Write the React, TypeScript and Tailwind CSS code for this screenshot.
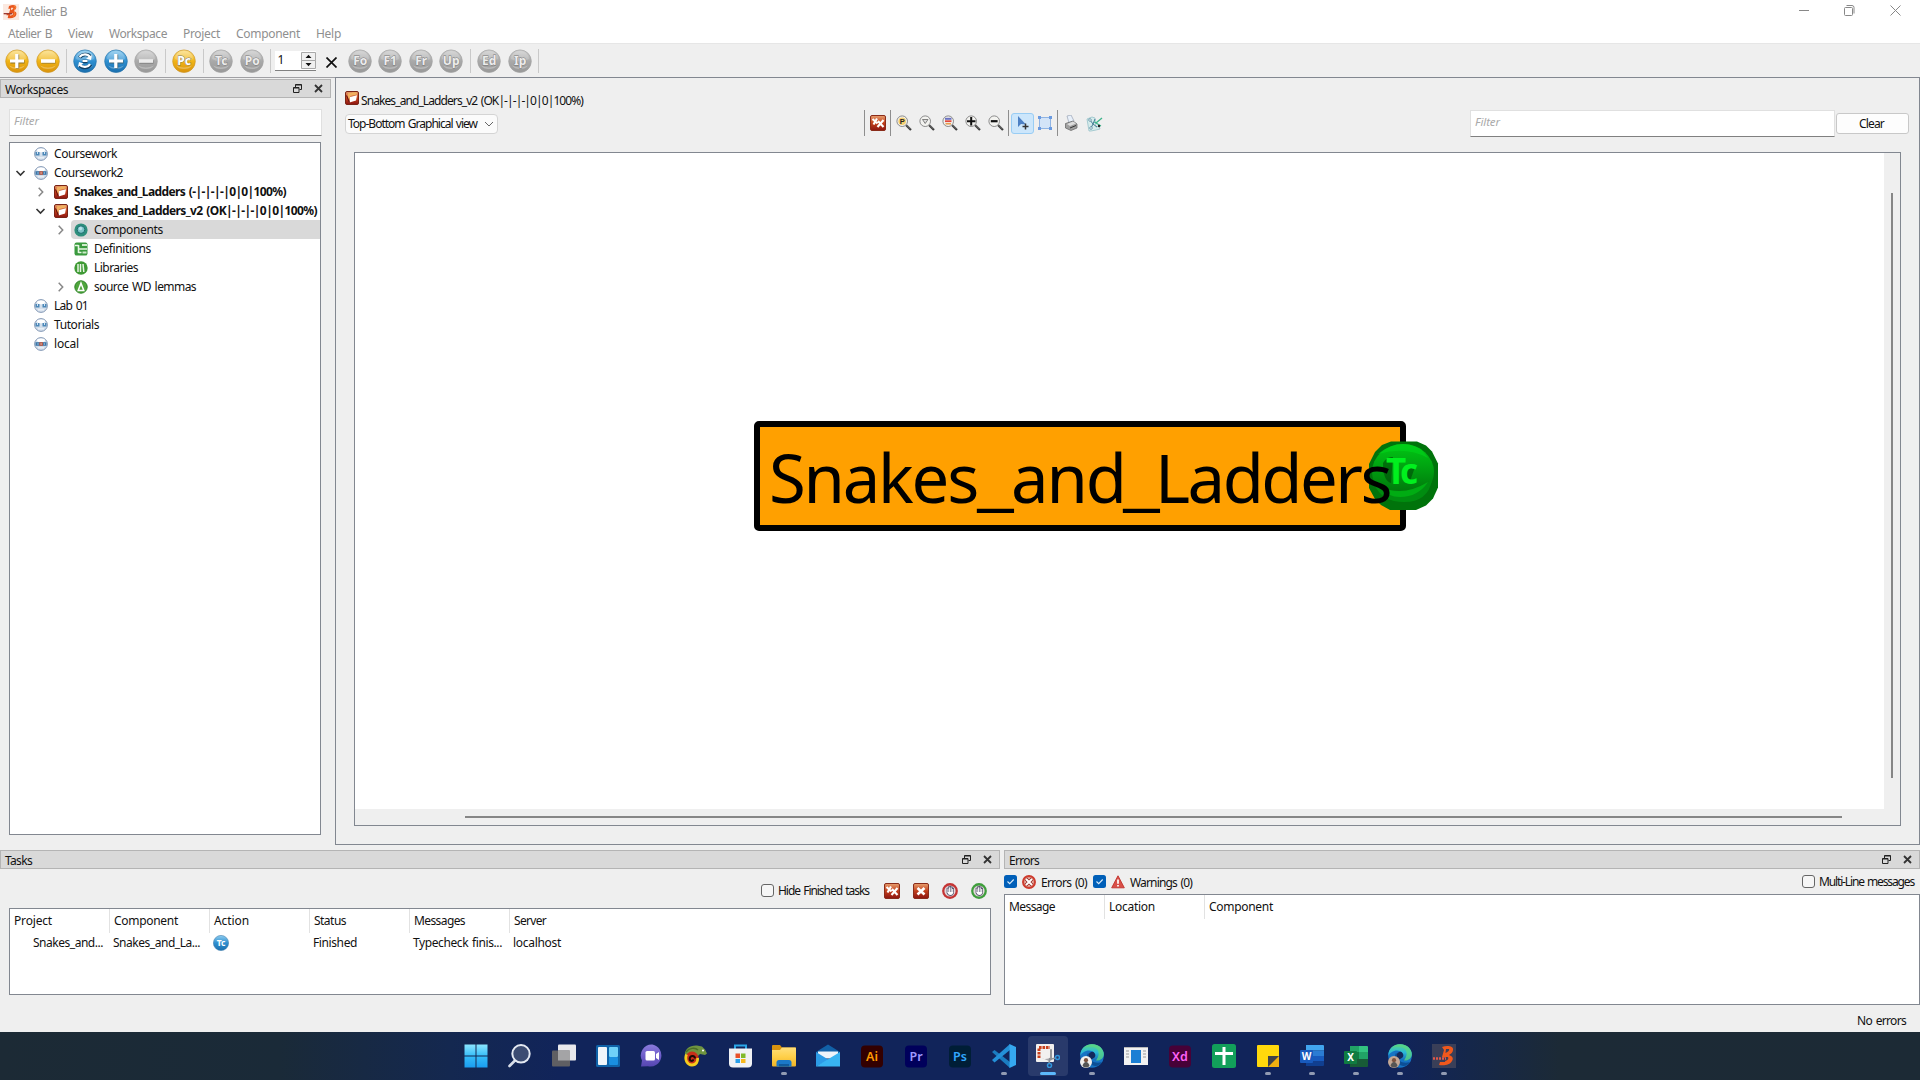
import { useLayoutEffect, useRef, type ReactNode } from "react";

/* Text run whose tracking is computed so that it spans the given width. */
function Fit({ w, children, className = "" }: { w: number; children: string; className?: string }) {
  const ref = useRef<HTMLSpanElement>(null);
  useLayoutEffect(() => {
    const el = ref.current;
    if (!el) return;
    el.style.letterSpacing = "0px";
    const natural = el.getBoundingClientRect().width;
    el.style.letterSpacing = `${(w - natural) / children.length}px`;
  }, [w, children]);
  return (
    <span ref={ref} className={`inline-block shrink-0 whitespace-pre [word-spacing:1.2px] ${className}`}>
      {children}
    </span>
  );
}

function Gradients() {
  const stops: [string, string, string, string][] = [
    ["gold", "#fbe08a", "#f0b416", "#d9920c"],
    ["blue", "#8fcdf0", "#2e8fd0", "#1b6fae"],
    ["grey", "#cfcfcf", "#a9a9a9", "#989898"],
    ["red", "#e8a070", "#c2401c", "#8c1512"],
    ["green", "#00c814", "#009a10", "#006a0a"],
    ["win", "#8be6ff", "#35bdf8", "#1a9df0"],
    ["folder", "#ffdf7a", "#ffcf48", "#f0b428"],
    ["chat", "#8b7bdc", "#6f5fcb", "#5546b0"],
    ["edge", "#58d68a", "#2bb8d8", "#1566b8"],
  ];
  return (
    <svg className="absolute size-0" aria-hidden="true">
      <defs>
        {stops.map(([id, a, b, c]) => (
          <linearGradient key={id} id={id} x1="0" y1="0" x2="0" y2="1">
            <stop offset="0" stopColor={a} />
            <stop offset="0.5" stopColor={b} />
            <stop offset="1" stopColor={c} />
          </linearGradient>
        ))}
      </defs>
    </svg>
  );
}

type Tone = "gold" | "blue" | "grey";
const rim: Record<Tone, string> = { gold: "#cf9a2c", blue: "#2a76ac", grey: "#a4a4a4" };

function Orb({ tone, label, glyph }: { tone: Tone; label?: string; glyph?: "plus" | "minus" | "sync" }) {
  const ink = tone === "grey" ? "#ececec" : "#ffffff";
  return (
    <svg className="size-6 shrink-0" viewBox="0 0 24 24">
      <circle cx="12" cy="12.2" r="11.3" fill={`url(#${tone})`} stroke={rim[tone]} strokeWidth="0.7" />
      <path d="M3 10a9 8 0 0 1 18 0q-9 5-18 0z" fill="#fff" opacity="0.2" />
      <path d="M4 16.5a9 6.5 0 0 0 16 0q-8 4-16 0z" fill="#fff" opacity="0.28" />
      {glyph === "plus" && (
        <>
          <path d="M12.6 5.5v14M5.5 12.8h14" stroke="#4c4c3c" strokeWidth="3.2" opacity="0.6" />
          <path d="M11.8 5v14M5 12h14" stroke={ink} strokeWidth="3.2" />
        </>
      )}
      {glyph === "minus" && (
        <>
          <path d="M5.5 13h14" stroke="#555" strokeWidth="3.6" opacity="0.4" />
          <path d="M5 12h14" stroke={ink} strokeWidth="3.6" />
        </>
      )}
      {glyph === "sync" && (
        <>
          <path d="M6.5 8.5c3-4 9-4 11-.5M17.5 15.5c-2 4-8 4-11 .5M9.5 12.5h5" fill="none" stroke="#124064" strokeWidth="3.6" />
          <path d="M6.5 8c3-3.5 8-3.5 10.5 0M17 15c-2 3.5-7.5 4-10.5.5M9.5 12h5" fill="none" stroke="#fff" strokeWidth="2.2" />
          <path d="M19 6l-1 5-5-1.5zM5 18l1-5 4.5 1.5z" fill="#fff" />
        </>
      )}
      {label && (
        <text x="12.2" y="15.5" textAnchor="middle" fontSize="12" fontWeight="700" fontFamily="Noto Sans, sans-serif" fill={ink} stroke="#777" strokeWidth="0.8" paintOrder="stroke">{label}</text>
      )}
    </svg>
  );
}

const Sep = ({ className = "" }: { className?: string }) => <div className={`h-6 w-px shrink-0 bg-[#c9c9c9] ${className}`} />;

function BLogo({ className }: { className: string }) {
  return (
    <svg className={className} viewBox="0 0 24 24">
      <rect width="24" height="24" fill="#fbe9e0" />
      <path d="M9 3c5-2 11-2 11 2 0 3-3 5-4 6 3 0 5 2 4 5-1 4-6 6-13 5l1-4h-3l1-3h3l2-7H8z" fill="#e8541c" />
      <path d="M12 5.5h3.5q1 2-3.5 4zM11.5 13.5h3.5q1.5 3-4.5 4z" fill="#fbd9c4" />
      <path d="M1 14.5h13" stroke="#9c3a30" strokeWidth="2" />
      <path d="M16 3l3 1-2 5M17 12l1 3-3 4" stroke="#ff9a3c" fill="none" />
    </svg>
  );
}

const ProjectIcon = () => (
  <svg className="size-3.5 shrink-0" viewBox="0 0 14 14">
    <rect x=".5" y=".5" width="13" height="13" rx="1.5" fill="url(#red)" stroke="#7a2416" />
    <path d="M2.5 3.5l1-1.500h3l1-.8h4l.5 2.300-6.500 1.500-1.500 5z" fill="#f0b060" />
    <path d="M5 6l7-1.800-1 5.300-6.500 2z" fill="#fff" />
    <path d="M1.5 4.5l3 7" stroke="#5c100c" />
  </svg>
);

const WorkspaceIcon = ({ open }: { open?: boolean }) => (
  <svg className="size-3.5 shrink-0" viewBox="0 0 14 14">
    <circle cx="7" cy="7" r="6.4" fill="#d3deeb" stroke="#8599b5" strokeWidth="1" />
    <ellipse cx="7" cy="3.4" rx="4" ry="1.8" fill="#fff" />
    {open ? (
      <>
        <path d="M1.5 5.2h11v3.6h-11z" fill="#3a75a8" />
        <path d="M5.3 5.2h3.6v3.6H5.3z" fill="#c25a42" />
        <path d="M4 6.2v1.6M7.1 6.2v1.6M10.3 6.2v1.6" stroke="#e6eef6" strokeWidth=".7" />
      </>
    ) : (
      <>
        <path d="M1.5 5h4v3.5h-4zM8.5 5h4v3.5h-4z" fill="#4b87b8" />
        <path d="M3.5 4.5v2.5M10.5 4.5v2.5" stroke="#d3e3f1" />
      </>
    )}
    <path d="M4 10.8h6" stroke="#eef3f8" strokeWidth="1.2" />
  </svg>
);

const GreenIcon = ({ kind }: { kind: "comp" | "def" | "lib" | "wd" }) => (
  <svg className="size-3.5 shrink-0" viewBox="0 0 14 14">
    {kind === "comp" && (
      <>
        <circle cx="7" cy="7" r="6.6" fill="#2d8f7c" />
        <circle cx="7" cy="6.6" r="3.8" fill="#7fc4c8" stroke="#1d6f70" />
        <circle cx="6.5" cy="5.5" r="1.7" fill="#b9e2ea" />
      </>
    )}
    {kind === "def" && (
      <>
        <rect x=".5" y=".5" width="13" height="13" rx="2" fill="#3a9a3e" />
        <path d="M4.5 3v8M4.5 3.5H1M4.5 7h8.5M4.5 10.5h3" stroke="#e7f6e4" strokeWidth="1.6" />
        <path d="M8 3h5M8.5 10.5h4" stroke="#cfeccb" strokeWidth="1.8" />
      </>
    )}
    {kind === "lib" && (
      <>
        <circle cx="7" cy="7" r="6.7" fill="#3f9a35" />
        <path d="M4 3v8M6.5 3v8M9 3l.8 8" stroke="#eaf6e6" strokeWidth="1.5" />
      </>
    )}
    {kind === "wd" && (
      <>
        <circle cx="7" cy="7" r="6.2" fill="#4fa53d" stroke="#2c8426" />
        <path d="M7 3.2l2.8 7.3H4.2z" fill="none" stroke="#fff" strokeWidth="1.5" />
      </>
    )}
  </svg>
);

const Chevron = ({ state }: { state?: "open" | "closed" }) => (
  <svg className="size-3 shrink-0" viewBox="0 0 12 12" fill="none">
    {state === "open" && <path d="M2.5 4l4 4 4-4" stroke="#333" strokeWidth="1.6" />}
    {state === "closed" && <path d="M4.7 1.8l4 4.2-4 4.2" stroke="#888" strokeWidth="1.5" />}
  </svg>
);

function DockTitle({ title, w, className = "" }: { title: string; w: number; className?: string }) {
  return (
    <div className={`flex h-[19px] shrink-0 items-center border border-[#b4b4b4] bg-[#d9d9d9] pl-1 pr-[7px] ${className}`}>
      <Fit w={w} className="relative top-px">{title}</Fit>
      <svg className="ml-auto size-[9px]" viewBox="0 0 9 9" fill="none" stroke="#222">
        <path d="M2.5 3V.5h6V5.5H6.5M.5 3.5h5.5v5H.5zM2.5 1h6M.5 4h5.5" />
      </svg>
      <svg className="ml-3 size-[9px]" viewBox="0 0 9 9" fill="none" stroke="#333" strokeWidth="1.8">
        <path d="M1 1l7 7M8 1l-7 7" />
      </svg>
    </div>
  );
}

interface Row {
  label: string;
  w: number;
  indent: string;
  state?: "open" | "closed";
  icon: ReactNode;
  bold?: boolean;
  selected?: boolean;
}

const rows: Row[] = [
  { label: "Coursework", w: 63, indent: "pl-1", icon: <WorkspaceIcon /> },
  { label: "Coursework2", w: 69, indent: "pl-1", state: "open", icon: <WorkspaceIcon open /> },
  { label: "Snakes_and_Ladders (-|-|-|-|0|0|100%)", w: 212, indent: "pl-6", state: "closed", icon: <ProjectIcon />, bold: true },
  { label: "Snakes_and_Ladders_v2 (OK|-|-|-|0|0|100%)", w: 243, indent: "pl-6", state: "open", icon: <ProjectIcon />, bold: true },
  { label: "Components", w: 69, indent: "pl-11", state: "closed", icon: <GreenIcon kind="comp" />, selected: true },
  { label: "Definitions", w: 57, indent: "pl-11", icon: <GreenIcon kind="def" /> },
  { label: "Libraries", w: 44, indent: "pl-11", icon: <GreenIcon kind="lib" /> },
  { label: "source WD lemmas", w: 102, indent: "pl-11", state: "closed", icon: <GreenIcon kind="wd" /> },
  { label: "Lab 01", w: 34, indent: "pl-1", icon: <WorkspaceIcon /> },
  { label: "Tutorials", w: 45, indent: "pl-1", icon: <WorkspaceIcon /> },
  { label: "local", w: 25, indent: "pl-1", icon: <WorkspaceIcon open /> },
];

function TreeRow({ row }: { row: Row }) {
  return (
    <div className={`flex h-[19px] items-center ${row.indent}`}>
      <Chevron state={row.state} />
      <div className={`ml-[5px] flex h-full flex-1 items-center gap-1.5 rounded-l-sm pl-[3px] ${row.selected ? "bg-[#d9d9d9]" : ""}`}>
        {row.icon}
        <Fit w={row.w} className={row.bold ? "font-bold" : ""}>{row.label}</Fit>
      </div>
    </div>
  );
}

function Checkbox({ on }: { on?: boolean }) {
  return on ? (
    <svg className="size-[13px] shrink-0" viewBox="0 0 13 13">
      <rect width="13" height="13" rx="2.5" fill="#005fb8" />
      <path d="M3.5 6.5l2.2 2.2 4-4.2" fill="none" stroke="#d9ebfa" strokeWidth="1.1" />
    </svg>
  ) : (
    <div className="size-[13px] shrink-0 rounded-[3px] border border-[#666] bg-[#f6f6f6]" />
  );
}

const RedSquare = ({ double, className }: { double?: boolean; className: string }) => (
  <svg className={className} viewBox="0 0 16 16">
    <rect x=".5" y=".5" width="15" height="15" rx="1.5" fill="url(#red)" stroke="#8a2c1a" />
    {double ? (
      <path d="M2.5 4l5 4.5M7 3.5l-3.5 6M8 6l5.5 6M13.5 5L7.5 12" stroke="#fff" strokeWidth="2.1" />
    ) : (
      <path d="M4.5 5l7 6.5M11.5 5l-7 6.5" stroke="#fff" strokeWidth="2.6" />
    )}
  </svg>
);

const Hand = ({ color }: { color: string }) => (
  <svg className="size-4 shrink-0" viewBox="0 0 16 16">
    <circle cx="8" cy="8" r="7.9" fill={color} />
    <circle cx="8" cy="8" r="5.6" fill="#e3d9dc" />
    <path d="M4.6 10V4.800h1.600V3.300h1.500V2.800h1.500v.7h1.500v1.300h1.300V10q-.8 3-3.500 3T4.600 10z" fill="#5d5a72" />
    <path d="M6 10V5.500M7.600 10V4.300M9.200 10V4.500M10.700 10V6" stroke="#fff" strokeWidth="1" />
    <path d="M5.500 9h5.700q0 3-2.700 3t-3-3z" fill="#fff" />
  </svg>
);

function Magnifier({ children }: { children: ReactNode }) {
  return (
    <svg className="size-4 shrink-0" viewBox="0 0 16 16">
      <path d="M10 10l5 5" stroke="#3c3c3c" strokeWidth="2.2" />
      <path d="M10.5 10l4 4" stroke="#999" strokeWidth=".6" />
      <circle cx="6.2" cy="6.2" r="5.3" fill="#f3f3f0" stroke="#8b8b8b" />
      {children}
    </svg>
  );
}

const GroupBar = () => <div className="h-[26px] w-px shrink-0 bg-[#8e8e8e]" />;

function HeaderCell({ w, children, className = "" }: { w: number; children: string; className?: string }) {
  return (
    <div className={`flex h-6 w-[100px] shrink-0 items-center border-r border-[#e2e2e2] pl-1 ${className}`}>
      <Fit w={w}>{children}</Fit>
    </div>
  );
}

function FilterBox({ className }: { className: string }) {
  return (
    <div className={`flex h-[27px] shrink-0 items-center border border-[#e0e0e0] border-b-[#808080] bg-white pl-1 text-[11.5px] italic text-[#aaa] ${className}`}>
      <Fit w={25} className="relative -top-0.5">Filter</Fit>
    </div>
  );
}

const Adobe = ({ bg, fg, t }: { bg: string; fg: string; t: string }) => (
  <>
    <rect x="1" y="1.5" width="22" height="22" rx="4" fill={bg} />
    <text x="12" y="16.5" fontSize="12.5" fontWeight="600" textAnchor="middle" fontFamily="Noto Sans, sans-serif" fill={fg}>{t}</text>
  </>
);

const EdgeShape = ({ face }: { face: string }) => (
  <>
    <circle cx="12" cy="12" r="11.8" fill="#1673c4" />
    <path d="M.3 12C0 4 6 0 12 .2 19 .3 24 5 23.8 10.5c-.3 4-3.8 6.5-7.8 6-2.5-.5-2.8-1.7-1.7-3.2C16 10 13 6.5 9 6.5S1.5 9 .3 12z" fill="url(#edge)" />
    <path d="M12 .2c7 0 11.9 5 11.8 10.3-.3 4-3.8 6.5-7.8 6q5-7 1-11.5C14.5 2.5 8 2 4 4 6 1.5 9 .3 12 .2z" fill="#57d584" opacity=".8" />
    <path d="M8 9c-3 5 0 12 7 13 3 .2 6-2 7-4-6 2-13 0-12-7z" fill="#0c4f96" />
    <path d="M14.5 13.5c1.5-1.5 1-4-1-5.5-2-.7-4 .5-4.5 2-.5 2 0 4 1.5 6z" fill="#132a5c" />
    <circle cx="6" cy="18" r="6" fill={face} />
    <circle cx="6" cy="16.2" r="2.1" fill="#7a5340" />
    <path d="M2.5 22q1-4 3.5-4t3.5 4q-3.5 3-7 0z" fill="#555" />
  </>
);

const apps: { icon: ReactNode; mark?: "dot" | "active" }[] = [
  { icon: <path d="M.5.5h11v11H.5zM12.5.5h11v11h-11zM.5 12.5h11v11H.5zM12.5 12.5h11v11h-11z" fill="url(#win)" /> },
  {
    icon: (
      <>
        <path d="M8 15.5L1.5 22" stroke="#d7dde8" strokeWidth="2.6" strokeLinecap="round" />
        <circle cx="13" cy="9.8" r="8.7" fill="#3c4c72" stroke="#e4e9f2" strokeWidth="2" />
      </>
    ),
  },
  {
    icon: (
      <>
        <rect x="6" y=".5" width="18" height="16" rx="1" fill="#e9e9ec" />
        <rect x="0" y="6.5" width="18" height="16" rx="1" fill="#5f5f63" />
        <path d="M6 6.5h12v10H6z" fill="#a4a4a6" />
      </>
    ),
  },
  {
    icon: (
      <>
        <rect y="1" width="24" height="22" rx="1.5" fill="#0f62a8" />
        <rect x="2" y="3" width="9" height="18" rx="1" fill="#f0f5fa" />
        <rect x="13" y="3" width="9" height="10" rx="1" fill="#6fd0f8" />
        <rect x="13" y="13" width="9" height="8" rx="1" fill="#1a8fe0" />
      </>
    ),
  },
  {
    icon: (
      <>
        <path d="M12.5.5A11 11 0 1 1 8 22.3L1 22.5l1-6A11 11 0 0 1 12.5.5z" fill="url(#chat)" />
        <rect x="5.5" y="7" width="9.5" height="9.5" rx="1.5" fill="#fff" />
        <path d="M16 10l3-2v8l-3-2z" fill="#fff" />
      </>
    ),
  },
  {
    icon: (
      <>
        <path d="M1 12C0 5 6 1 13 1.5l5 1 3 3 2 4-2 1.5-5-1-3 3z" fill="#6f9440" />
        <path d="M2 8c3-4 9-5 12-2" stroke="#4c6e28" strokeWidth="1.5" fill="none" />
        <circle cx="8" cy="14" r="6.5" fill="#c8301a" />
        <path d="M2.5 10.5c-2 5 .5 10.5 5.5 10.5 4.5 0 6-4 5.5-7" stroke="#f6cc1c" strokeWidth="2.8" fill="none" />
        <path d="M11 14.5c0-3.5-5-3.5-5.3 0-.2 2.8 3.3 3.3 3.6.8" stroke="#1a0a05" strokeWidth="2" fill="none" />
        <circle cx="19" cy="6.5" r="1" fill="#fff" />
      </>
    ),
  },
  {
    icon: (
      <>
        <path d="M7 5V1.5h11V5" fill="none" stroke="#2aa6e8" strokeWidth="2" />
        <path d="M1 4.5h23v15q0 4-4 4H5q-4 0-4-4z" fill="#f0f1f4" />
        <path d="M7.5 9.5h4.5v4.5H7.5z" fill="#e8502a" />
        <path d="M13 9.5h4.5v4.5H13z" fill="#80b92a" />
        <path d="M7.5 15h4.5v4H7.5z" fill="#2a9fe8" />
        <path d="M13 15h4.5v4H13z" fill="#f8b81c" />
      </>
    ),
  },
  {
    mark: "dot",
    icon: (
      <>
        <path d="M0 2q0-1 1-1h7l2 2.5H24V8H0z" fill="#d8930f" />
        <path d="M0 6h8l2-2.5h13q1 0 1 1v17q0 1-1 1H1q-1 0-1-1z" fill="url(#folder)" />
        <path d="M4.5 22.5v-4q0-2.5 2.5-2.5h10q2.5 0 2.5 2.5v4z" fill="#1b78c8" />
        <path d="M7 20h10v2.5H7z" fill="#105a9c" />
      </>
    ),
  },
  {
    icon: (
      <>
        <path d="M0 8L12 .5 24 8v4H0z" fill="#1261a8" />
        <path d="M2 7.5h20v7H2z" fill="#eef4fa" />
        <path d="M0 8l13 8L0 22.5z" fill="#2c9be6" />
        <path d="M24 8v14.5H0z" fill="#38b4f2" />
      </>
    ),
  },
  { icon: <Adobe bg="#330000" fg="#ff9a00" t="Ai" /> },
  { icon: <Adobe bg="#00005b" fg="#9e99ff" t="Pr" /> },
  { icon: <Adobe bg="#001e36" fg="#31a8ff" t="Ps" /> },
  {
    mark: "dot",
    icon: (
      <>
        <path d="M0 8l2.5-2L18 18v6z" fill="#1b7cc0" />
        <path d="M0 16l2.5 2.5L18 6V0z" fill="#2490d8" />
        <path d="M17.5 0L24 3v18l-6.5 3z" fill="#35a8f0" />
      </>
    ),
  },
  {
    mark: "active",
    icon: (
      <>
        <rect x="0" y="0" width="18" height="18" rx="1" fill="#f2f0ef" />
        <path d="M3 14V3.5h11" fill="none" stroke="#c9401c" strokeWidth="3" strokeDasharray="2.6 .9" />
        <path d="M6 14q2 2 8 0V5h2v11l-3 1z" fill="#a8a8ac" />
        <path d="M15 6v9l5-1M14 14l-1 5" stroke="#8f9296" strokeWidth="1.6" fill="none" />
        <circle cx="21.5" cy="13.5" r="2" fill="none" stroke="#3296dc" strokeWidth="1.5" />
        <circle cx="13.5" cy="21.5" r="2" fill="none" stroke="#3296dc" strokeWidth="1.5" />
      </>
    ),
  },
  { mark: "dot", icon: <EdgeShape face="#f1efed" /> },
  {
    icon: (
      <>
        <rect y="3" width="24" height="18" fill="#f2f2f2" />
        <path d="M0 3.5h24" stroke="#b8b8b8" />
        <rect x="7" y="6" width="10" height="13" fill="#1c7fd4" />
        <path d="M2 7h3M2 10h3M2 13h3M19 7h3M19 10h3M19 13h3" stroke="#9a9a9a" />
      </>
    ),
  },
  { icon: <Adobe bg="#470137" fg="#ff61f6" t="Xd" /> },
  {
    icon: (
      <>
        <rect width="24" height="24" rx="2.5" fill="#12a05a" />
        <path d="M12 3v18M3 9.5h18" stroke="#fff" strokeWidth="3" />
      </>
    ),
  },
  {
    mark: "dot",
    icon: (
      <>
        <path d="M2 1h20q1 0 1 1v10L12 23H2q-1 0-1-1V2q0-1 1-1z" fill="#ffd90c" />
        <path d="M12 12h11v11H12z" fill="#f0b010" />
        <path d="M12 12h11L12 23z" fill="#3f4248" />
      </>
    ),
  },
  {
    mark: "dot",
    icon: (
      <>
        <path d="M6 1h17q1 0 1 1v4.5H6z" fill="#41a5ee" />
        <path d="M6 6.5h18V12H6z" fill="#2b7cd3" />
        <path d="M6 12h18v5.5H6z" fill="#185abd" />
        <path d="M6 17.5h18V21q0 1-1 1H6z" fill="#103f91" />
        <rect y="6" width="13" height="13" rx="1" fill="#185abd" />
        <text x="6.5" y="16.2" fontSize="10" fontWeight="700" textAnchor="middle" fontFamily="Noto Sans, sans-serif" fill="#fff">W</text>
      </>
    ),
  },
  {
    mark: "dot",
    icon: (
      <>
        <path d="M6 2h9v6H6z" fill="#21a366" />
        <path d="M15 2h8q1 0 1 1v5h-9z" fill="#33c481" />
        <path d="M6 8h18v7H6z" fill="#107c41" />
        <path d="M6 15h18v7q0 1-1 1H6z" fill="#185c37" />
        <path d="M15 8h9v7h-9z" fill="#21a366" />
        <rect y="7" width="13" height="13" rx="1" fill="#107c41" />
        <text x="6.5" y="17.2" fontSize="10" fontWeight="700" textAnchor="middle" fontFamily="Noto Sans, sans-serif" fill="#fff">X</text>
      </>
    ),
  },
  { mark: "dot", icon: <EdgeShape face="#c3a795" /> },
  {
    mark: "dot",
    icon: (
      <>
        <rect width="24" height="24" fill="#3a3f58" />
        <path d="M10 3c5-2 12-1 11 3 0 2-2 4-4 5 3 1 5 3 3 6-2 4-8 5-13 4l1-3h5l1-4-4-1 2-7z" fill="#f0581c" />
        <path d="M14 5h3q1 2-3.5 4zM13 13h3q1.5 3-3.5 4z" fill="#3a3f58" />
        <path d="M1 14.5h13" stroke="#e0584a" strokeWidth="2.5" strokeDasharray="2 1" />
      </>
    ),
  },
];

function Taskbar() {
  return (
    <div className="flex h-12 shrink-0 items-center bg-[linear-gradient(90deg,#1c2a35_0,#1a2a38_280px,#142850_450px,#11245a_560px,#11245a_1400px,#15274a_1470px,#1c2a36_1560px,#1c2a35_100%)] pl-[456.4px]">
      {apps.map((app, i) => (
        <div key={i} className={`relative mr-1 flex size-10 shrink-0 items-center justify-center rounded ${app.mark === "active" ? "bg-white/10" : ""}`}>
          <svg className="size-6" viewBox="0 0 24 24">{app.icon}</svg>
          {app.mark === "dot" && <div className="absolute bottom-px left-[17px] h-[3px] w-1.5 rounded-full bg-[#929bb2]" />}
          {app.mark === "active" && <div className="absolute bottom-px left-3 h-[3px] w-4 rounded-full bg-[#5cb8fb]" />}
        </div>
      ))}
    </div>
  );
}

function TopBars() {
  const menus: [string, number][] = [["Atelier B", 44], ["View", 25], ["Workspace", 58], ["Project", 37], ["Component", 64], ["Help", 25]];
  return (
    <>
      <div className="flex h-6 shrink-0 items-center bg-white pl-[3px] text-[#8f8f8f]">
        <BLogo className="size-4 shrink-0" />
        <Fit w={44} className="ml-1">Atelier B</Fit>
        <div className="ml-auto flex items-center pb-1 pr-[19px]">
          <svg className="h-[11px] w-[102px]" viewBox="0 0 102 11" fill="none" stroke="#888">
            <path d="M0 5.5h10" />
            <rect x="45.5" y="2.5" width="8" height="8" rx="1" />
            <path d="M47.5.5h5.5q2 0 2 2v6" />
            <path d="M91.5.5l10 10M101.5.5l-10 10" />
          </svg>
        </div>
      </div>
      <div className="flex h-[19px] shrink-0 items-center gap-4 bg-white pl-2 text-[#8f8f8f]">
        {menus.map(([label, w]) => <Fit key={label} w={w}>{label}</Fit>)}
      </div>
      <div className="flex h-[34px] shrink-0 items-center gap-[6.5px] border-t border-[#e6e6e6] pl-[5px]">
        <Orb tone="gold" glyph="plus" />
        <Orb tone="gold" glyph="minus" />
        <Sep className="-mr-[0.5px]" />
        <Orb tone="blue" glyph="sync" />
        <Orb tone="blue" glyph="plus" />
        <Orb tone="grey" glyph="minus" />
        <Sep />
        <Orb tone="gold" label="Pc" />
        <Sep className="-mr-px" />
        <Orb tone="grey" label="Tc" />
        <Orb tone="grey" label="Po" />
        <Sep />
        <div className="-ml-[3px] flex h-5 w-[41px] items-center justify-between border-b border-[#808080] bg-white pl-[3px]">
          <span>1</span>
          <svg className="h-[17px] w-[15px]" viewBox="0 0 15 17">
            <path d="M.5.5h14v8H.5zM.5 8.5h14v8H.5z" fill="#f0f0f0" stroke="#a8a8a8" />
            <path d="M4.5 6l3-3.3L10.5 6zM4.5 11l3 3.3 3-3.3z" fill="#111" />
          </svg>
        </div>
        <svg className="ml-1 mr-1 mt-1 size-[11px]" viewBox="0 0 11 11" stroke="#111" strokeWidth="1.7">
          <path d="M.5.5l10 10M10.5.5l-10 10" />
        </svg>
        <Orb tone="grey" label="Fo" />
        <Orb tone="grey" label="F1" />
        <Orb tone="grey" label="Fr" />
        <Orb tone="grey" label="Up" />
        <Sep />
        <Orb tone="grey" label="Ed" />
        <Orb tone="grey" label="Ip" />
        <Sep />
      </div>
    </>
  );
}

function GraphToolbar() {
  return (
    <div className="flex h-[27px] items-center">
      <div className="flex h-[20px] w-[153px] items-center justify-between rounded-sm border border-[#d4d4d4] bg-[#fbfbfb] pl-[2px] pr-1">
        <Fit w={129}>Top-Bottom Graphical view</Fit>
        <svg className="size-2" viewBox="0 0 8 8" fill="none" stroke="#666"><path d="M0 2l4 4 4-4" /></svg>
      </div>
      <div className="mb-px ml-[366px] flex items-center">
        <GroupBar />
        <RedSquare double className="ml-[5px] mr-1 size-4" />
        <GroupBar />
        <div className="ml-[5px] mr-1 flex gap-[7px]">
          <Magnifier>
            <circle cx="6.2" cy="6.2" r="3.8" fill="#f6cf70" />
            <text x="6.3" y="9" fontSize="7.5" fontWeight="700" textAnchor="middle" fontFamily="Liberation Sans, sans-serif" fill="#222">P</text>
          </Magnifier>
          <Magnifier><path d="M3.5 4.5h5.5L6.2 8.5z" fill="#ddd" stroke="#666" strokeWidth=".8" /></Magnifier>
          <Magnifier>
            <path d="M3 3.8h6.5" stroke="#6a70c0" strokeWidth="2" />
            <path d="M3 6.2h6.5" stroke="#e0483c" strokeWidth="1.8" />
            <path d="M3.5 8.8h5.5" stroke="#e8963c" strokeWidth="1.4" />
          </Magnifier>
          <Magnifier><path d="M6.2 2v8.5M2 6.2h8.5" stroke="#111" strokeWidth="2" /></Magnifier>
          <Magnifier><path d="M2.8 6.2h6.8" stroke="#111" strokeWidth="2.2" /></Magnifier>
        </div>
        <GroupBar />
        <div className="ml-0.5 flex h-[21px] w-[23px] items-center justify-center rounded-[3px] border border-[#99cdf4] bg-[#cce6fb]">
          <svg className="mt-px size-[15px]" viewBox="0 0 15 15">
            <path d="M3 0v11l3-3 5 .5z" fill="#4d80c4" />
            <path d="M10.5 7.5v6M7.5 10.5h6" stroke="#333" strokeWidth="1.5" />
          </svg>
        </div>
        <svg className="ml-1 mr-[5px] size-3.5" viewBox="0 0 14 14">
          <path d="M1.5 1.5h11v11h-11z" fill="#d3e4f8" stroke="#8fb4e4" />
          <path d="M0 0h3v3H0zM11 0h3v3h-3zM0 11h3v3H0zM11 11h3v3h-3z" fill="#6a9ae0" />
        </svg>
        <GroupBar />
        <svg className="ml-[5px] size-4" viewBox="0 0 16 16">
          <path d="M4 1l4-1 3 6-5 2z" fill="#e8f0fa" stroke="#9aa4b4" strokeWidth=".7" />
          <path d="M2.5 8.5l7.5-2.5 4 3v4l-6 2.5-5.5-2.5z" fill="#a0a0a0" stroke="#606060" strokeWidth=".7" />
          <path d="M4 9l6-2.5 3 2-6 2.5z" fill="#ddd" />
          <path d="M7 13l6-2.5" stroke="#333" />
        </svg>
        <svg className="ml-[7px] size-[17px]" viewBox="0 0 17 17">
          <path d="M1 4l5-2 3 1 1 9 3-1 1 3-4 1-5 1-2 0z" fill="#d6ecec" stroke="#8cbcc4" strokeWidth=".7" />
          <path d="M4 5l3 4-2 4M7 9l4 3M9 4l-2 5" stroke="#447c94" fill="none" />
          <path d="M16 3l-6 5 5 3M11 8l-3-1" stroke="#3fb48c" fill="none" strokeWidth="1.3" />
          <circle cx="4" cy="5" r="1.3" fill="#fff" stroke="#447c94" strokeWidth=".7" />
          <circle cx="5" cy="13" r="1.3" fill="#fff" stroke="#447c94" strokeWidth=".7" />
          <circle cx="13" cy="11" r="1.2" fill="#222" />
        </svg>
      </div>
      <FilterBox className="ml-auto w-[365px]" />
      <div className="ml-px mr-px flex h-[21px] w-[73px] items-center justify-center rounded-[3px] border border-[#c8c8c8] bg-[#fdfdfd] pr-0.5">
        <Fit w={25}>Clear</Fit>
      </div>
    </div>
  );
}

function GraphView() {
  return (
    <div className="relative ml-[9px] mt-[15px] h-[674px] w-[1547px] border border-[#828790] bg-[#efefef]">
      <div className="h-[656px] w-[1529px] bg-white" />
      <div className="absolute left-[1536px] top-10 h-[585px] w-0.5 bg-[#868686]" />
      <div className="absolute left-[110px] top-[663px] h-0.5 w-[1377px] bg-[#868686]" />
      <div className="absolute left-[399px] top-[268px] h-[110px] w-[652px] rounded-[5px] border-[6px] border-black bg-[#ffa000]" />
      <svg className="absolute left-[1014px] top-[288px] size-[70px]" viewBox="0 0 70 70">
        <path d="M22 .5h26l9 4 6 6 6 12v24l-5 11-7 7-10 4.5H21l-9-5-6-6-6-11V23l6-12 7-7z" fill="#00730b" />
        <ellipse cx="34" cy="31" rx="31" ry="28" fill="url(#green)" />
        <path d="M5 43q28 17 58-4-4 22-28 22-22 0-30-18z" fill="#008c10" />
        <path d="M9 13Q30-4 52 8l7 9q-22-12-50-4z" fill="#00d41a" opacity=".6" />
        <path d="M12 46q22 10 47-5-10 15-28 15-12 0-19-10z" fill="#00b414" opacity=".8" />
        <path d="M14 22q4-7 10-6l-2 26q-8-2-8-20zM34 36q1-9 12-10l-6 17q-6-1-6-7z" fill="#004a08" opacity=".6" />
        <text x="33" y="43" fontSize="35" fontWeight="700" textAnchor="middle" fontFamily="Noto Sans, sans-serif" fill="#00f01e" textLength="32">Tc</text>
      </svg>
      <div className="absolute left-[414px] top-[276px] flex text-[67px] leading-[96px] text-black">
        <Fit w={208}>Snakes</Fit>
        <span className="w-9"><span className="inline-block origin-left scale-x-[1.24]">_</span></span>
        <Fit w={114} className="-ml-0.5">and</Fit>
        <span className="-ml-0.5 w-9"><span className="inline-block origin-left scale-x-[1.24]">_</span></span>
        <Fit w={235} className="-ml-[4px]">Ladders</Fit>
      </div>
    </div>
  );
}

function TasksDock() {
  return (
    <div className="flex w-[1000px] shrink-0 flex-col">
      <DockTitle title="Tasks" w={27} />
      <div className="flex h-[39px] items-center pl-[761px] pt-1">
        <Checkbox />
        <Fit w={91} className="ml-1">Hide Finished tasks</Fit>
        <div className="ml-[15px] flex gap-[13px]">
          <RedSquare double className="size-4" />
          <RedSquare className="size-4" />
          <Hand color="#c43434" />
          <Hand color="#3f9e3c" />
        </div>
      </div>
      <div className="ml-[9px] h-[87px] w-[982px] border border-[#828790] bg-white">
        <div className="flex">
          <HeaderCell w={38}>Project</HeaderCell>
          <HeaderCell w={64}>Component</HeaderCell>
          <HeaderCell w={35}>Action</HeaderCell>
          <HeaderCell w={32}>Status</HeaderCell>
          <HeaderCell w={51}>Messages</HeaderCell>
          <HeaderCell w={32} className="border-r-0">Server</HeaderCell>
        </div>
        <div className="grid h-5 grid-cols-[repeat(6,100px)] items-center justify-items-start pl-[3px]">
          <Fit w={70} className="ml-5">Snakes_and...</Fit>
          <Fit w={87}>Snakes_and_La...</Fit>
          <svg className="size-4" viewBox="0 0 16 16">
            <circle cx="8" cy="8" r="7.6" fill="url(#blue)" stroke="#3f7fae" strokeWidth=".6" />
            <text x="8" y="11" fontSize="8.5" fontWeight="700" textAnchor="middle" fontFamily="Noto Sans, sans-serif" fill="#fff">Tc</text>
          </svg>
          <Fit w={44}>Finished</Fit>
          <Fit w={89}>Typecheck finis...</Fit>
          <Fit w={48}>localhost</Fit>
        </div>
      </div>
    </div>
  );
}

function ErrorsDock() {
  return (
    <div className="ml-1 flex flex-1 flex-col">
      <DockTitle title="Errors" w={30} />
      <div className="flex h-[25px] items-center pr-[6px]">
        <Checkbox on />
        <svg className="ml-[5px] size-3.5" viewBox="0 0 14 14">
          <circle cx="7" cy="7" r="6.2" fill="#c8483c" stroke="#cf3a2c" strokeWidth="1.5" />
          <circle cx="7" cy="7" r="4.8" fill="#e9b4aa" />
          <path d="M4 4l6 6M10 4l-6 6" stroke="#8c2018" strokeWidth="3.4" />
          <path d="M4 4l6 6M10 4l-6 6" stroke="#fff" strokeWidth="2" />
        </svg>
        <Fit w={46} className="relative top-px ml-[5px]">Errors (0)</Fit>
        <div className="ml-1.5"><Checkbox on /></div>
        <svg className="ml-[5px] size-3.5" viewBox="0 0 14 14">
          <path d="M7 .8l6.3 12H.7z" fill="#d94f48" stroke="#c43a34" strokeLinejoin="round" />
          <path d="M7 4.5v4.3M7 10v1.5" stroke="#fff" strokeWidth="1.7" />
        </svg>
        <Fit w={62} className="relative top-px ml-[5px]">Warnings (0)</Fit>
        <div className="ml-auto flex items-center gap-1">
          <Checkbox />
          <Fit w={95}>Multi-Line messages</Fit>
        </div>
      </div>
      <div className="flex h-[111px] shrink-0 border border-[#828790] bg-white">
        <HeaderCell w={46}>Message</HeaderCell>
        <HeaderCell w={46}>Location</HeaderCell>
        <HeaderCell w={64} className="border-r-0">Component</HeaderCell>
      </div>
      <div className="flex h-[27px] shrink-0 items-center justify-end pr-[14px] pt-1">
        <Fit w={49}>No errors</Fit>
      </div>
    </div>
  );
}

export default function App() {
  return (
    <div className="flex h-[1080px] w-[1920px] flex-col overflow-hidden bg-[#efefef] font-['Noto_Sans','Open_Sans',sans-serif] text-[12px] leading-[16px] text-[#111]">
      <Gradients />
      <TopBars />
      <div className="flex h-[768px] shrink-0">
        <div className="flex w-[335px] shrink-0 flex-col border-t border-[#a0a0a4] pt-px">
          <DockTitle title="Workspaces" w={63} className="w-[331px]" />
          <FilterBox className="ml-[9px] mt-[11px] w-[313px]" />
          <div className="ml-[9px] mt-[6px] flex h-[693px] w-[312px] shrink-0 flex-col border border-[#828790] bg-white pt-px">
            {rows.map((row) => <TreeRow key={row.label} row={row} />)}
          </div>
        </div>
        <div className="flex flex-1 flex-col border border-[#828790] px-[9px] pt-3">
          <div className="flex h-5 items-center gap-0.5">
            <div className="pb-1"><ProjectIcon /></div>
            <Fit w={222} className="relative top-px">Snakes_and_Ladders_v2 (OK|-|-|-|0|0|100%)</Fit>
          </div>
          <GraphToolbar />
          <GraphView />
        </div>
      </div>
      <div className="mt-[5px] flex h-[182px] shrink-0">
        <TasksDock />
        <ErrorsDock />
      </div>
      <Taskbar />
    </div>
  );
}
